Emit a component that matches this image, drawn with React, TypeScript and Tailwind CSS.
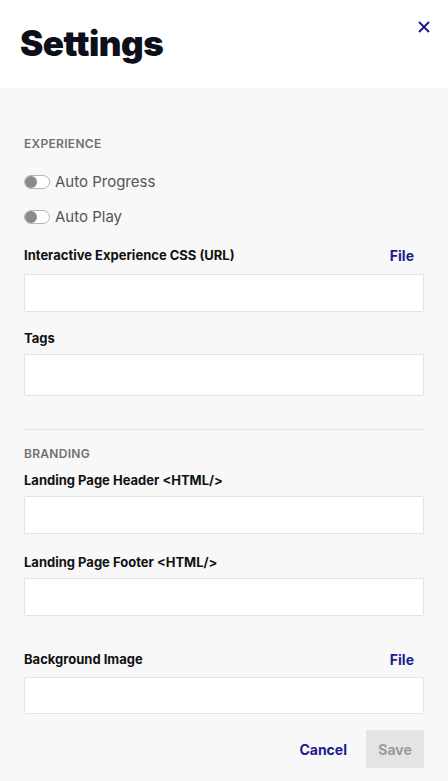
import React from "react";

function Toggle({ label, className = "" }: { label: string; className?: string }) {
  return (
    <div className={"flex h-5 items-center " + className}>
      <div className="relative h-[14px] w-[26px] rounded-full border border-[#b5b5b5] bg-white">
        <div className="absolute left-0 top-0 h-3 w-3 rounded-full bg-[#8a8a8a]" />
      </div>
      <span className="ml-[5px] text-[15px] leading-5 text-[#555]">{label}</span>
    </div>
  );
}

function Label({ text, file, className = "" }: { text: string; file?: boolean; className?: string }) {
  return (
    <div className={"flex h-5 items-center justify-between " + className}>
      <span className="text-[13px] font-bold leading-5 text-[#111]">{text}</span>
      {file && <span className="mr-[10px] text-[14px] font-bold text-[#1b1b8f]">File</span>}
    </div>
  );
}

function Input({ h, className = "" }: { h: string; className?: string }) {
  return <div className={"w-full rounded-[2px] border border-[#e3e3e3] bg-white " + h + " " + className} />;
}

export default function App() {
  return (
    <div className="w-[448px] h-[781px] overflow-hidden bg-[#f8f8f8]" style={{ fontFamily: "Inter, 'Liberation Sans', sans-serif" }}>
      <div className="relative h-[88px] bg-white px-[20px]">
        <h1 className="pt-[26px] text-[35px] font-black leading-none tracking-[-0.5px] text-[#0e0f1a]">Settings</h1>
        <svg className="absolute right-[18px] top-[21px]" width="12" height="12" viewBox="0 0 12 12" fill="none">
          <path d="M1 1L11 11M11 1L1 11" stroke="#1b1b8f" strokeWidth="2" />
        </svg>
      </div>
      <div className="px-6">
        <div className="mt-12 text-[12px] font-semibold leading-4 tracking-[0.3px] text-[#707070]">EXPERIENCE</div>
        <Toggle label="Auto Progress" className="mt-5" />
        <Toggle label="Auto Play" className="mt-[15px]" />
        <Label text="Interactive Experience CSS (URL)" file className="mt-[18px]" />
        <Input h="h-[38px]" className="mt-[9px]" />
        <Label text="Tags" className="mt-4" />
        <Input h="h-[42px]" className="mt-[6px]" />
        <div className="mt-[33px] border-t border-[#e3e3e3]" />
        <div className="mt-4 text-[12px] font-semibold leading-4 tracking-[0.3px] text-[#707070]">BRANDING</div>
        <Label text="Landing Page Header <HTML/>" className="mt-2" />
        <Input h="h-[38px]" className="mt-[6px]" />
        <Label text="Landing Page Footer <HTML/>" className="mt-[18px]" />
        <Input h="h-[38px]" className="mt-[6px]" />
        <Label text="Background Image" file className="mt-[33px]" />
        <Input h="h-[37px]" className="mt-2" />
        <div className="mt-4 flex items-center justify-end">
          <button className="mr-[19px] text-[14px] font-bold text-[#1b1b8f]">Cancel</button>
          <button className="h-[38px] w-[58px] bg-[#e4e4e4] text-[14px] font-bold text-[#9a9a9a]">Save</button>
        </div>
      </div>
    </div>
  );
}
